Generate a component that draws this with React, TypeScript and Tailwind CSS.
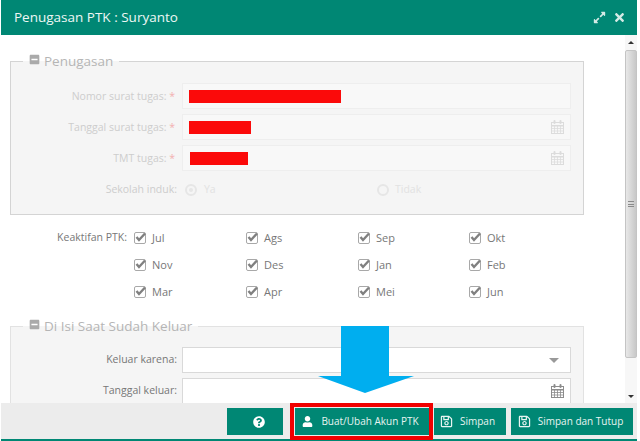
import { FaExpandAlt, FaTimes, FaQuestionCircle, FaUser, FaRegSave, FaMinusSquare } from "react-icons/fa";

function Cal({ className }: { className: string }) {
  return (
    <svg width="13" height="14" viewBox="0 0 13 14" className={className}>
      <rect x="0.5" y="2.5" width="12" height="11" fill="none" stroke="currentColor" />
      <path d="M0 5h13v1.5H0z" fill="currentColor" />
      <path d="M0 8.5h13M0 11h13M3.5 6v8M6.5 6v8M9.5 6v8" stroke="currentColor" strokeWidth="0.8" fill="none" />
      <rect x="2.5" y="0" width="2" height="4" rx="1" fill="currentColor" />
      <rect x="8.5" y="0" width="2" height="4" rx="1" fill="currentColor" />
    </svg>
  );
}

function Check({ label }: { label: string }) {
  return (
    <div className="flex h-[27px] items-center gap-[5px] pb-[1px] text-[11px] text-[#777]">
      <svg width="13" height="12" viewBox="0 0 13 12" className="shrink-0">
        <rect x="0.5" y="0.5" width="11" height="11" rx="1.5" fill="#fff" stroke="#a8a8a8" />
        <path d="M2.5 5l2.5 3 6-6.5" fill="none" stroke="#808080" strokeWidth="2.4" />
      </svg>
      <span>{label}</span>
    </div>
  );
}

function Row({ label, star, bar, cal }: { label: string; star?: boolean; bar?: string; cal?: boolean }) {
  return (
    <div className="flex items-center">
      <div className="w-[167px] pr-[3px] pt-[1px] text-right text-[10.5px] text-[#cdcdcd]">
        {label}
        {star && <span className="text-[#f3b0b0]"> *</span>}
      </div>
      <div className="ml-[4px] flex h-[26px] w-[389px] items-center justify-between border border-[#eeeeee] bg-[#f8f8f8] pl-[6px] pr-[6px]">
        <div className={`h-[13px] bg-[#fb0a0a] ${bar}`} />
        {cal && <Cal className="text-[#dcdcdc]" />}
      </div>
    </div>
  );
}

function Legend({ text }: { text: string }) {
  return (
    <legend className="ml-[12px] flex h-[20px] items-center gap-[4px] px-[6px] text-[13.5px] text-[#b5b5b5]">
      <FaMinusSquare className="mb-[3px] text-[11px] text-[#aaaaaa]" />
      {text}
    </legend>
  );
}

function Btn({ children, className }: { children: React.ReactNode; className: string }) {
  return (
    <div className={`flex h-[27px] items-center justify-center bg-[#008774] text-[10px] text-[#e8f4f1] ${className}`}>
      {children}
    </div>
  );
}

export default function App() {
  const months = ["Jul", "Ags", "Sep", "Okt", "Nov", "Des", "Jan", "Feb", "Mar", "Apr", "Mei", "Jun"];
  return (
    <div className="relative flex h-[441px] w-[640px] flex-col overflow-hidden bg-white pl-[1px] pr-[3px] font-['Open_Sans',sans-serif]">
      <header className="flex h-[35px] shrink-0 items-center justify-between bg-[#008774] pl-[13px] pr-[11px] text-[13.5px] text-[#eef7f5]">
        <span>Penugasan PTK : Suryanto</span>
        <div className="flex items-center gap-[7px] text-[#d5ebe6]">
          <FaExpandAlt className="text-[13px]" />
          <FaTimes className="text-[13px]" />
        </div>
      </header>

      <div className="flex min-h-0 flex-1">
        <main className="min-w-0 flex-1 overflow-hidden pt-[16px]">
          <fieldset className="ml-[9px] h-[164px] w-[574px] border border-[#d4d4d4] bg-[#f5f5f5] p-0">
            <Legend text="Penugasan" />
            <div className="mt-[12px] flex flex-col gap-[5px]">
              <Row label="Nomor surat tugas:" star bar="w-[152px]" />
              <Row label="Tanggal surat tugas:" star bar="w-[62px]" cal />
              <Row label="TMT tugas:" star bar="ml-[1px] w-[58px]" cal />
            </div>
            <div className="mt-[9px] flex h-[20px] items-center text-[10.5px] text-[#e2e2e2]">
              <div className="w-[167px] pr-[1px] text-right text-[#cdcdcd]">Sekolah induk:</div>
              <div className="ml-[7px] flex w-[192px] items-center gap-[7px]">
                <span className="flex h-[12px] w-[12px] items-center justify-center rounded-full border-2 border-[#e6e6e6]">
                  <span className="h-[4px] w-[4px] rounded-full bg-[#e6e6e6]" />
                </span>
                Ya
              </div>
              <div className="flex items-center gap-[6px]">
                <span className="h-[12px] w-[12px] rounded-full border-2 border-[#e6e6e6]" />
                Tidak
              </div>
            </div>
          </fieldset>

          <div className="mt-[10px] flex">
            <div className="flex h-[26px] w-[126px] items-center justify-end text-[10.5px] text-[#777]">Keaktifan PTK:</div>
            <div className="ml-[7px] grid grid-cols-[112px_112px_111px_100px]">
              {months.map((m) => (
                <Check key={m} label={m} />
              ))}
            </div>
          </div>

          <fieldset className="ml-[9px] mt-[10px] w-[574px] border border-[#e2e2e2] bg-[#f5f5f5] p-0">
            <Legend text="Di Isi Saat Sudah Keluar" />
            <div className="mt-[11px] flex flex-col gap-[5px]">
              <div className="flex items-center">
                <div className="w-[167px] pr-[1px] text-right text-[10.5px] text-[#777]">Keluar karena:</div>
                <div className="ml-[4px] flex h-[26px] w-[389px] items-center justify-end border border-[#d9d9d9] bg-white pr-[11px]">
                  <div className="h-0 w-0 border-x-[5px] border-t-[5px] border-x-transparent border-t-[#999]" />
                </div>
              </div>
              <div className="flex items-center">
                <div className="w-[167px] pr-[1px] text-right text-[10.5px] text-[#777]">Tanggal keluar:</div>
                <div className="ml-[4px] flex h-[26px] w-[389px] items-center justify-end border border-[#d9d9d9] bg-white pr-[6px]">
                  <Cal className="text-[#8c8c8c]" />
                </div>
              </div>
            </div>
          </fieldset>
        </main>

        <aside className="flex w-[12px] shrink-0 flex-col items-center bg-[#f7f7f7]">
          <div className="flex h-[15px] w-full items-center justify-center">
            <div className="h-0 w-0 border-x-[3px] border-b-[3px] border-x-transparent border-b-[#333]" />
          </div>
          <div className="flex h-[308px] w-full items-center justify-center rounded-[2px] border border-[#c4c4c4] bg-gradient-to-r from-[#e8e8e8] to-[#c8c8c8]">
            <div className="h-[6px] w-[6px] border-y border-[#8a8a8a] bg-[linear-gradient(#8a8a8a,#8a8a8a)] bg-[length:100%_1px] bg-center bg-no-repeat" />
          </div>
          <div className="flex flex-1 items-end justify-center pb-[5px]">
            <div className="h-0 w-0 border-x-[3px] border-t-[3px] border-x-transparent border-t-[#333]" />
          </div>
        </aside>
      </div>

      <footer className="flex h-[38px] shrink-0 items-start justify-end gap-[5px] border-b-2 border-[#008774] bg-[#ececec] pr-[4px] pt-[5px]">
        <Btn className="mr-[7px] w-[56px] pl-[8px]">
          <FaQuestionCircle className="text-[12px] text-white" />
        </Btn>
        <Btn className="w-[134px] gap-[8px] pr-[3px]">
          <FaUser className="text-[11px] text-white" />
          Buat/Ubah Akun PTK
        </Btn>
        <Btn className="w-[72px] gap-[7px] pr-[5px]">
          <FaRegSave className="text-[13px]" />
          Simpan
        </Btn>
        <Btn className="w-[122px] gap-[7px] pr-[3px]">
          <FaRegSave className="text-[13px]" />
          Simpan dan Tutup
        </Btn>
      </footer>

      <svg width="96" height="67" viewBox="0 0 96 67" className="absolute left-[318px] top-[326px]">
        <path d="M23 0h48v50h25L47 67 0 50h23z" fill="#00aeef" />
      </svg>
      <div className="absolute left-[290px] top-[403px] h-[37px] w-[143px] border-[4px] border-[#f00000]" />
    </div>
  );
}
